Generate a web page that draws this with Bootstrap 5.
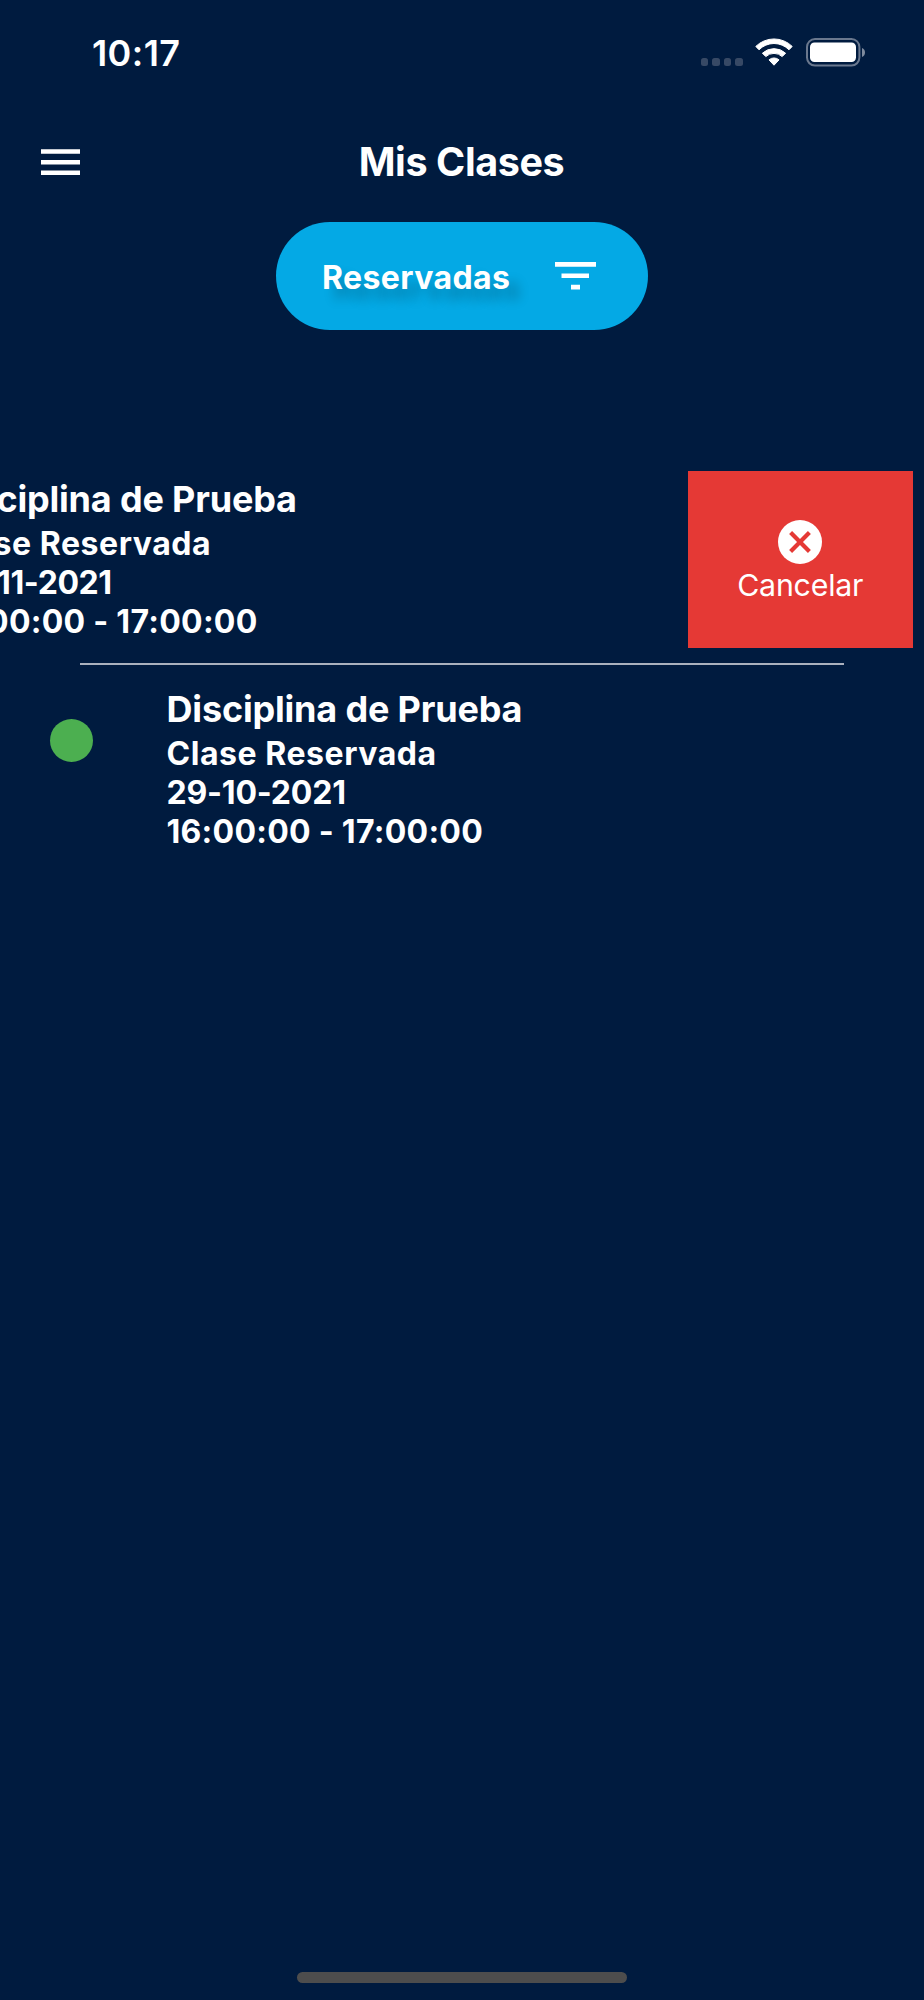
<!DOCTYPE html>
<html lang="es">
<head>
<meta charset="utf-8">
<meta name="viewport" content="width=device-width, initial-scale=1">
<title>Mis Clases</title>
<link href="https://cdn.jsdelivr.net/npm/bootstrap@5.3.0/dist/css/bootstrap.min.css" rel="stylesheet">
<style>
body{background:#001b3f;color:#fff;font-family:Inter,"Liberation Sans",sans-serif}
svg{display:block;flex:none}
.screen{height:2000px}
.status{height:133px;padding:38px 59px 0 92px}
.clock{font-size:36px;font-weight:600;line-height:30px;letter-spacing:.4px}
.cell-dots{gap:4px;padding-top:20px;margin-right:54px}
.cell-dots i{width:7.6px;height:8px;border-radius:2.5px;background:#374965}
.topbar{height:89px;padding:16px 41px 0}
.topbar h1{font-size:39.5px;font-weight:700;line-height:48px;margin-top:-11px;letter-spacing:-.4px}
.filter-btn{width:371.5px;height:108px;margin-left:276px;background:#04a9e5;padding:0 52px 0 46px}
.filter-btn span{font-size:32px;font-weight:700;line-height:40px;letter-spacing:.4px;margin-top:4px;text-shadow:11px 11px 11px rgba(0,0,0,.22)}
.classes{padding:141px 11px 0}
.slide-item{height:177px}
.slide-main{width:902px}
.slid{margin-left:-225.5px}
.dot{width:43px;height:43px;background:#4caf50;margin:38.5px 73.500px 0 39px}
.info{padding-top:5px;font-size:32px;font-weight:700;line-height:39px;white-space:nowrap}
.info h2{font-size:36px;font-weight:700;line-height:47.500px;margin:0 0 .5px;letter-spacing:-.18px}
.kind{letter-spacing:.55px}
.date{letter-spacing:-.2px}
.slid .date{letter-spacing:-.4px}
.hours{letter-spacing:.27px}
.cancel{width:225.5px;background:#e53935;font-size:30.3px;line-height:36px;letter-spacing:-.2px}
.cancel span{margin-top:3px;margin-bottom:-3px}
.rule{height:2px;background:#aab1be;margin:15px 69px 15.500px}
.home-bar{width:330px;height:11px;background:#4d4d4d;margin-bottom:17px}
</style>
</head>
<body>
<div class="screen d-flex flex-column overflow-hidden">
  <header class="status d-flex align-items-start">
    <div class="clock me-auto">10:17</div>
    <div class="d-flex">
      <div class="cell-dots d-flex me-2"><i></i><i></i><i></i><i></i></div>
      <svg class="ms-1" width="110" height="30" viewBox="755 38 110 30" fill="#fff">
        <path d="M755.8 46.4a26 26 0 0 1 36.4 0l-3.2 3.4a21 21 0 0 0-30 0z" stroke="#fff" stroke-width="1" stroke-linejoin="round"/>
        <path d="M762.4 53.2a17 17 0 0 1 23.2 0l-3.4 3.4a12 12 0 0 0-16.4 0z" stroke="#fff" stroke-width="1" stroke-linejoin="round"/>
        <path d="M769 59.9a7.4 7.4 0 0 1 10 0l-5 5.3z" stroke="#fff" stroke-width="1" stroke-linejoin="round"/>
        <rect x="807" y="39" width="52.4" height="26.6" rx="8" fill="none" stroke="#6a788e" stroke-width="2"/>
        <rect x="810" y="42.5" width="46" height="19.6" rx="4.5"/>
        <path d="M862 48v9c2-.6 3-2.500 3-4.500s-1-3.900-3-4.500z" fill="#7f8b9e"/>
      </svg>
    </div>
  </header>
  <nav class="topbar d-flex align-items-start">
    <svg width="39" height="27" viewBox="0 0 39 27" fill="#fff"><path d="M0 .2h39v4.500H0zM0 11h39v4.500H0zM0 21.500h39v4.500H0z"/></svg>
    <h1 class="flex-fill text-center mb-0 me-4 pe-3">Mis Clases</h1>
  </nav>
  <button class="filter-btn btn rounded-pill border-0 text-white d-flex align-items-center justify-content-between flex-shrink-0">
    <span>Reservadas</span>
    <svg width="41" height="28" viewBox="0 0 41 28" fill="#fff"><path d="M0 0h41v4.700H0zM6.500 11.600H34v4.500H6.500zM16 22.800h9v4.700h-9z"/></svg>
  </button>
  <main class="classes flex-fill">
    <article class="slide-item d-flex">
      <div class="slide-main slid d-flex align-items-start flex-shrink-0">
        <div class="dot rounded-circle flex-shrink-0"></div>
        <div class="info"><h2>Disciplina de Prueba</h2><div class="kind">Clase Reservada</div><div class="date">03-11-2021</div><div class="hours">16:00:00 - 17:00:00</div></div>
      </div>
      <div class="cancel d-flex flex-column align-items-center justify-content-center flex-shrink-0">
        <svg width="44" height="44" viewBox="0 0 44 44"><circle cx="22" cy="22" r="22" fill="#fff"/><path d="M12.600 12.600l18.800 18.800M31.400 12.600l-18.800 18.800" stroke="#e53935" stroke-width="4.200"/></svg>
        <span>Cancelar</span>
      </div>
    </article>
    <div class="rule"></div>
    <article class="slide-item d-flex">
      <div class="slide-main d-flex align-items-start">
        <div class="dot rounded-circle flex-shrink-0"></div>
        <div class="info"><h2>Disciplina de Prueba</h2><div class="kind">Clase Reservada</div><div class="date">29-10-2021</div><div class="hours">16:00:00 - 17:00:00</div></div>
      </div>
    </article>
  </main>
  <div class="home-bar rounded-pill align-self-center flex-shrink-0"></div>
</div>
<script src="https://cdn.jsdelivr.net/npm/bootstrap@5.3.0/dist/js/bootstrap.bundle.min.js"></script>
</body>
</html>
